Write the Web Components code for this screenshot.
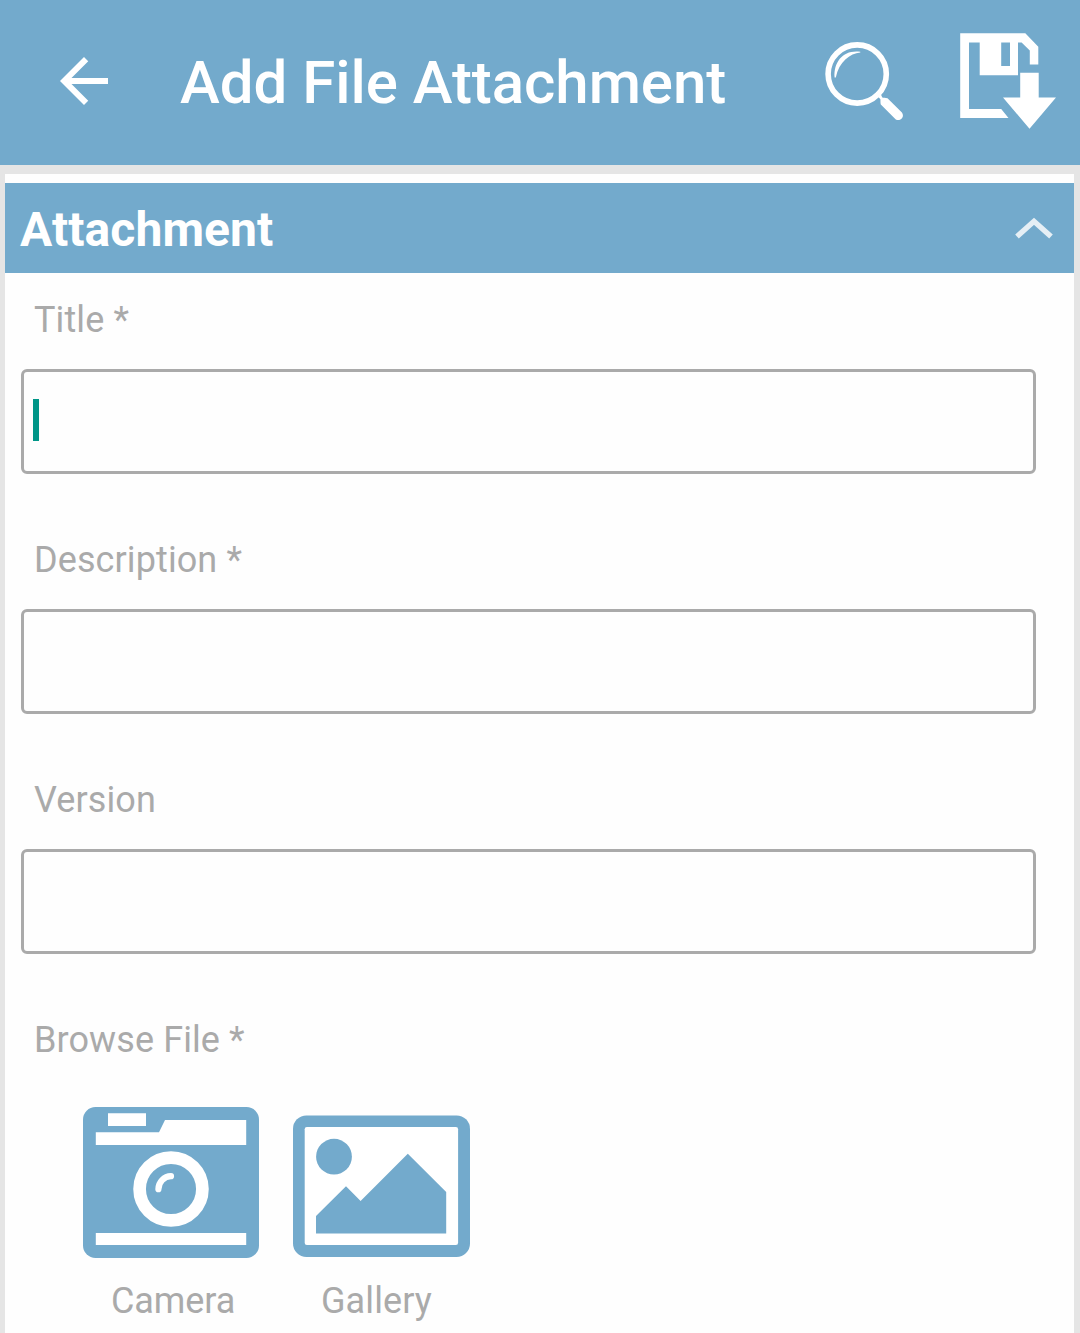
<!DOCTYPE html>
<html lang="en">
<head>
<meta charset="utf-8">
<title>Add File Attachment</title>
<style>
html, body { margin: 0; height: 100%; }
body { --blue: #73aacc; --grey: #aaaaaa; background: #e5e5e5; font-family: Roboto, "Liberation Sans", sans-serif; overflow: hidden; }
</style>
</head>
<body>
<file-attachment-page></file-attachment-page>
<script>
const define = (name, html) => customElements.define(name, class extends HTMLElement {
  constructor() {
    super();
    const t = document.createElement('template');
    t.innerHTML = html;
    this.attachShadow({ mode: 'open' }).append(t.content.cloneNode(true));
  }
});

define('icon-back', `
<style>:host{display:block;width:48px;height:48px}svg{display:block}</style>
<svg width="48" height="48" viewBox="4 4 16 16"><path fill="#fff" d="M20 11H7.83l5.59-5.59L12 4l-8 8 8 8 1.41-1.41L7.83 13H20v-2z"/></svg>`);

define('icon-search', `
<style>:host{display:block;width:80px;height:80px}svg{display:block}</style>
<svg width="80" height="80" viewBox="824 41 80 80">
  <circle cx="857.2" cy="74" r="29.1" fill="none" stroke="#fff" stroke-width="5.6"/>
  <path fill="#fff" d="M834.6 77.500C833.500 61 844 49.500 860.300 51.800V52.600C850 53.500 839 62 835.800 77.500Z"/>
  <path fill="#fff" d="M877.500 96L880.500 93.500L882.300 97.500C883.500 97.800 885.500 97.700 887.500 98.300L901.900 112.600C905 116.500 900.500 121.700 895.800 119.400L880.800 104.500C880.300 102.500 880.600 101 880.400 99.200Z"/>
</svg>`);

define('icon-save', `
<style>:host{display:block;width:96px;height:96px}svg{display:block}</style>
<svg width="96" height="96" viewBox="960 33 96 96">
  <path fill="#fff" fill-rule="evenodd" d="M960.200 33.200H1025.300L1038.300 46.700V64.500H1029.800V50.500L1021.600 42.400H1018V75.300H979.700V42.400H969V109H1001.200L1008.500 118H960.200ZM1001.200 42.400V66H1010V42.400Z"/>
  <path fill="#fff" d="M1020.200 72.700H1038.700V97.500H1056L1029.500 128.800L1003 97.500H1020.200Z"/>
</svg>`);

define('icon-chevron', `
<style>:host{display:block;width:38px;height:22px}svg{display:block}</style>
<svg width="38" height="22" viewBox="1015 217 38 22"><path fill="none" stroke="#e5eff5" stroke-width="5.4" d="M1017 236.600L1034 221.300L1051 236.600"/></svg>`);

define('icon-camera', `
<style>:host{display:block;width:176px;height:151px}svg{display:block}</style>
<svg width="176" height="151" viewBox="83 1107 176 151">
  <rect x="83" y="1107" width="176" height="151" rx="12.500" fill="#73aacc"/>
  <path fill="#fff" d="M108 1113.300H146V1126H108ZM95.800 1132.300H159L165 1120H246.200V1145H95.800ZM95.800 1233H246.200V1245H95.800Z"/>
  <circle cx="171" cy="1189" r="31.400" fill="none" stroke="#fff" stroke-width="12.700"/>
  <path fill="none" stroke="#fff" stroke-width="6.200" stroke-linecap="round" d="M158.400 1189.200A12.700 13 0 0 1 171 1176.200"/>
</svg>`);

define('icon-gallery', `
<style>:host{display:block;width:177px;height:142px}svg{display:block}</style>
<svg width="177" height="142" viewBox="293 1115 177 142">
  <rect x="293" y="1115.400" width="177" height="141.600" rx="13.500" fill="#73aacc"/>
  <rect x="304.700" y="1127" width="153.400" height="118" rx="2.200" fill="#fff"/>
  <circle cx="334" cy="1156.700" r="17.900" fill="#73aacc"/>
  <path fill="#73aacc" d="M316 1216L346 1186.300L360.600 1201L407.800 1153.700L446.200 1192V1233.400H316Z"/>
</svg>`);

define('app-bar', `
<style>
:host{display:flex;box-sizing:border-box;height:165px;padding:0 24px 0 60px;background:var(--blue);color:#fff}
icon-back{margin-top:57px}
h1{margin:48px 0 0 72px;flex:1;font-size:60px;line-height:70px;font-weight:500;letter-spacing:-.04px;white-space:nowrap}
icon-search{margin-top:41px}
icon-save{margin:33px 0 0 56px}
</style>
<icon-back></icon-back><h1><slot></slot></h1><icon-search></icon-search><icon-save></icon-save>`);

define('section-header', `
<style>
:host{display:flex;align-items:center;justify-content:space-between;box-sizing:border-box;height:90px;padding:0 21px 0 15px;background:var(--blue);color:#fff}
h2{margin:0;padding-top:4px;font-size:48px;line-height:56px;font-weight:700;letter-spacing:.08px}
</style>
<h2><slot></slot></h2><icon-chevron></icon-chevron>`);

define('field-label', `
<style>:host{display:block;padding:26px 0 0 29px;font-size:36px;line-height:42px;letter-spacing:.1px;color:var(--grey)}</style>
<slot></slot>`);

define('text-field', `
<style>
:host{display:block;height:240px}
.box{display:flex;align-items:center;box-sizing:border-box;height:105px;margin:28px 38px 0 16px;padding-left:9px;border:3px solid var(--grey);border-radius:6px}
.caret{display:none;width:6px;height:42px;margin-bottom:3px;background:#009688}
:host([focused]) .caret{display:block}
</style>
<field-label><slot></slot></field-label><div class="box"><div class="caret"></div></div>`);

define('file-source', `
<style>
:host{display:flex;flex-direction:column}
.label{padding:var(--label-gap,22px) 0 0 28px;font-size:36px;line-height:42px;color:var(--grey)}
</style>
<slot name="icon"></slot><div class="label"><slot></slot></div>`);

define('file-attachment-page', `
<style>
:host{display:block;height:100%}
main{box-sizing:border-box;height:1159px;margin:9px 6px 0 5px;padding-top:9px;background:#fefefe;overflow:hidden}
.sources{display:flex;gap:34px;padding-left:78px;margin-top:46px}
file-source{letter-spacing:-.08px}
.gallery{padding-top:8px;--label-gap:23px;letter-spacing:.1px}
</style>
<app-bar>Add File Attachment</app-bar>
<main>
  <section-header>Attachment</section-header>
  <text-field focused>Title *</text-field>
  <text-field>Description *</text-field>
  <text-field>Version</text-field>
  <field-label>Browse File *</field-label>
  <div class="sources">
    <file-source><icon-camera slot="icon"></icon-camera>Camera</file-source>
    <file-source class="gallery"><icon-gallery slot="icon"></icon-gallery>Gallery</file-source>
  </div>
</main>`);
</script>
</body>
</html>
